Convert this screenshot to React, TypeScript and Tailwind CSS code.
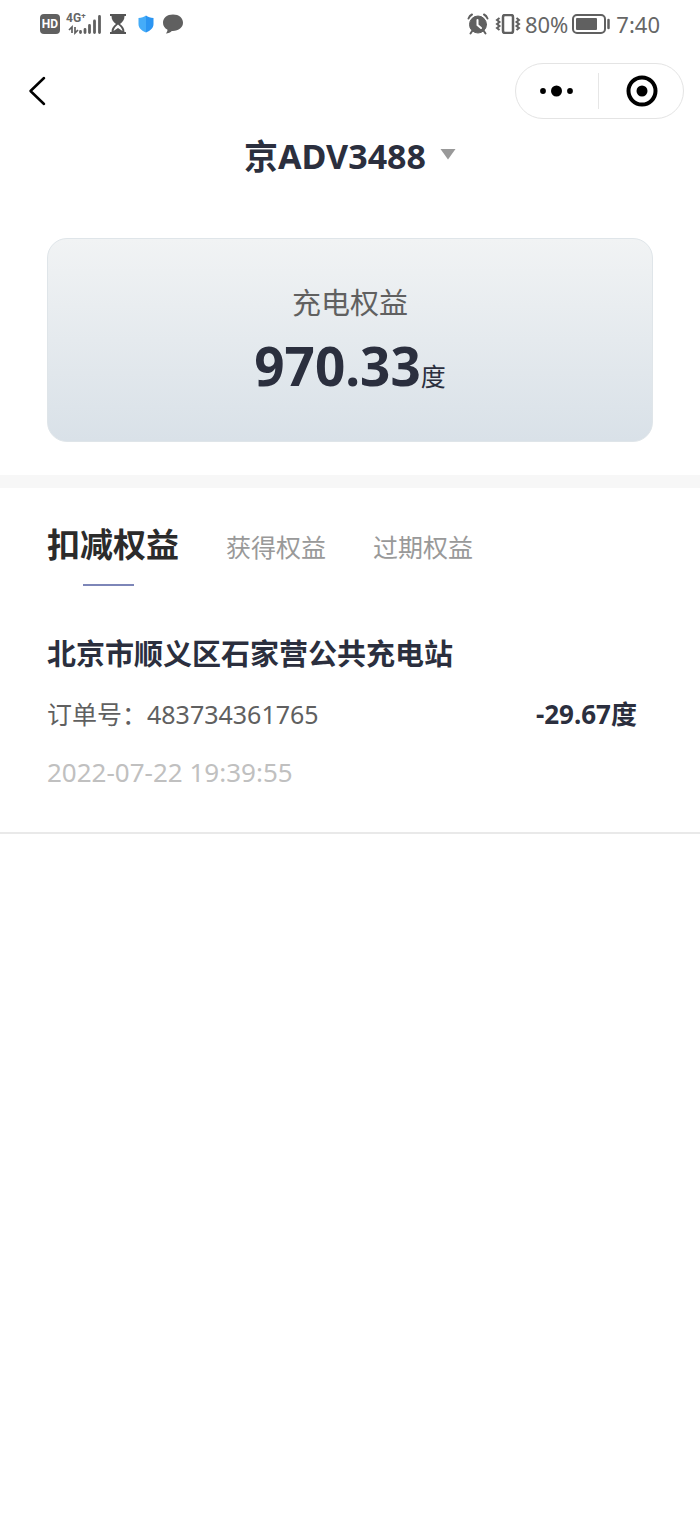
import { useState } from 'react'

const plates = ['京ADV3488']

const tabs = ['扣减权益', '获得权益', '过期权益']

const records = [
  {
    station: '北京市顺义区石家营公共充电站',
    orderNo: '483734361765',
    time: '2022-07-22 19:39:55',
    amount: '-29.67度',
  },
]

function StatusBar() {
  return (
    <div className="flex h-12 items-center justify-between px-10 text-[#666]">
      <div className="flex items-center">
        {/* HD badge */}
        <span className="flex h-5 w-5 items-center justify-center rounded bg-[#606060] font-[Roboto] text-[12px] font-bold text-white">
          HD
        </span>
        {/* Signal */}
        <div className="relative ml-1 h-6 w-9">
          <span className="absolute top-0 left-0.5 font-[Roboto] text-[12px] leading-3 font-bold">4G⁺</span>
          <svg className="absolute inset-0" width="38" height="24" viewBox="0 0 38 24" fill="none" stroke="#606060">
            <path d="M8 21v-6l-3 3M11 15v6l3-3" strokeWidth="1.700" />
            <path d="M16.500 19.500v1M21 17.500v3M25.500 13.500v7M30.500 9v11.500M35.500 4.500v16" strokeWidth="2.800" strokeLinecap="round" />
          </svg>
        </div>
        {/* Hourglass */}
        <svg className="ml-2.5" width="16" height="20" viewBox="0 0 16 20">
          <path d="M0 0h16v2h-1.500c0 4-2 6-4.500 8 2.500 2 4.500 4 4.500 8H16v2H0v-2h1.500c0-4 2-6 4.500-8-2.500-2-4.500-4-4.500-8H0z" fill="#555" />
          <path d="M8 10.500c-2.500 2-4 4-4.500 6.500L8 14l4.500 3c-.5-2.500-2-4.500-4.500-6.500z" fill="#fff" />
        </svg>
        {/* Shield */}
        <svg className="ml-3" width="16" height="18" viewBox="0 0 16 18">
          <path d="M8 .5c2 1.500 4.500 2.500 7.500 2.500v6c0 4-3 6.500-7.500 8.500z" fill="#2b95f2" />
          <path d="M8 .5C6 2 3.500 3 .5 3v6c0 4 3 6.500 7.500 8.500z" fill="#45acf8" />
        </svg>
        {/* Chat bubble */}
        <svg className="ml-2" width="22" height="20" viewBox="0 0 22 20" fill="#606060">
          <path d="M11 .5C5 .5 1 4 1 8.700c0 3 1.700 5.600 4.500 7 0 1.500-.7 2.800-1.700 3.800 2.700-.1 4.700-1.100 6-2.600 6.500.4 11.200-3.400 11.200-8.200C21 4 17 .5 11 .5z" />
        </svg>
      </div>

      <div className="flex items-center">
        {/* Alarm */}
        <svg width="22" height="22" viewBox="0 0 22 22" fill="none" stroke="#606060" strokeLinecap="round">
          <circle cx="11" cy="11.500" r="8.500" fill="#606060" />
          <path d="M1.500 5.500C2.200 3.700 3.500 2.300 5 1.500M20.500 5.500c-.7-1.800-2-3.200-3.500-4M5.500 17.500L3.500 20.500M16.500 17.500L18.500 20.500" strokeWidth="2" />
          <path d="M10.500 7v5l3.500 3" stroke="#fff" strokeWidth="2" />
        </svg>
        {/* Vibrate */}
        <svg className="ml-1.5" width="26" height="20" viewBox="0 0 26 20" fill="none" stroke="#606060">
          <rect x="8" y="1" width="10" height="18" rx="2" strokeWidth="2.500" />
          <path d="M4.500 4L2 6l2.500 2L2 10l2.500 2L2 14l2.500 2M21.500 4L24 6l-2.500 2 2.500 2-2.500 2 2.500 2-2.500 2" strokeWidth="2" />
        </svg>
        <span className="ml-1 text-[22px] leading-6">80%</span>
        {/* Battery */}
        <svg className="ml-1" width="38" height="20" viewBox="0 0 38 20" fill="none" stroke="#606060">
          <rect x="1" y="1" width="32" height="18" rx="4" strokeWidth="2" />
          <rect x="4" y="4" width="21" height="12" rx="1" fill="#606060" stroke="none" />
          <path d="M36.500 6v8" strokeWidth="2.500" strokeLinecap="round" />
        </svg>
        <span className="ml-1.5 text-[22px] leading-6">7:40</span>
      </div>
    </div>
  )
}

function NavBar() {
  return (
    <div className="mt-[15px] flex h-14 items-center justify-between pr-4 pl-7">
      <button aria-label="返回">
        <svg width="20" height="30" viewBox="0 0 20 30" fill="none" stroke="#000" strokeWidth="2.500" strokeLinecap="round" strokeLinejoin="round">
          <path d="M16 2L2.500 15 16 28" />
        </svg>
      </button>
      <div className="flex h-14 w-[169px] items-center rounded-full border border-[#e4e4e4]">
        <button className="flex flex-1 justify-center" aria-label="更多">
          <svg width="36" height="12" viewBox="0 0 36 12">
            <circle cx="4" cy="6" r="2.900" />
            <circle cx="17.500" cy="6" r="5.500" />
            <circle cx="31" cy="6" r="2.900" />
          </svg>
        </button>
        <span className="h-9 w-px bg-[#e6e6e6]" />
        <button className="flex flex-1 justify-center pl-0.5" aria-label="关闭">
          <svg width="32" height="32" viewBox="0 0 32 32">
            <circle cx="16" cy="16" r="13.500" fill="none" stroke="#000" strokeWidth="4" />
            <circle cx="16" cy="16" r="5.500" />
          </svg>
        </button>
      </div>
    </div>
  )
}

export default function App() {
  const [plate, setPlate] = useState(plates[0])
  const [active, setActive] = useState(0)

  return (
    <div className="min-h-screen bg-white font-['Noto_Sans','Noto_Sans_CJK_SC',sans-serif] text-[#2b2f3e]">
      <StatusBar />
      <NavBar />

      {/* Plate picker */}
      <label className="mt-3 flex items-center justify-center gap-3.5">
        <select
          aria-label="车牌号"
          value={plate}
          onChange={(e) => setPlate(e.target.value)}
          className="field-sizing-content h-12 appearance-none bg-transparent text-[34px] font-bold outline-none"
        >
          {plates.map((p) => (
            <option key={p}>{p}</option>
          ))}
        </select>
        <svg width="16" height="12" viewBox="0 0 16 12" fill="#999">
          <path d="M.5 0h15L8 10.500z" />
        </svg>
      </label>

      {/* Balance */}
      <section className="mx-[47px] mt-[59px] flex h-[204px] flex-col items-center rounded-[20px] border border-[#dfe5e9] bg-linear-to-b from-[#f1f3f4] to-[#d9e1e8] pt-11">
        <h2 className="text-[29px] leading-10 text-[#606060]">充电权益</h2>
        <p className="mt-2 flex items-baseline">
          <span className="text-[53px] leading-[70px] font-bold">970.33</span>
          <span className="text-[25px]">度</span>
        </p>
      </section>

      <div className="mt-[33px] h-[13px] bg-[#f7f7f7]" />

      {/* Tabs */}
      <div role="tablist" className="mt-8 flex h-[50px] items-baseline gap-[47px] px-[47px]">
        {tabs.map((tab, i) => (
          <button
            key={tab}
            role="tab"
            aria-selected={i === active}
            onClick={() => setActive(i)}
            className={
              i === active
                ? 'relative h-[50px] text-[33px] font-bold text-[#2b2b2b]'
                : 'h-[50px] text-[25px] text-[#999]'
            }
          >
            {tab}
            {i === active && (
              <span className="absolute -bottom-4 left-9 h-0.5 w-[51px] bg-[#7d86b8]" />
            )}
          </button>
        ))}
      </div>

      {/* Records */}
      <ul className="mt-16">
        {records.map((record) => (
          <li key={record.orderNo} className="border-b-2 border-[#e9e9e9] pr-[63px] pb-10 pl-[47px]">
            <h3 className="text-[29px] leading-10 font-bold">{record.station}</h3>
            <div className="mt-5 flex items-center justify-between leading-10">
              <span className="text-[25px] text-[#606060]">订单号：{record.orderNo}</span>
              <span className="text-[26px] font-bold">{record.amount}</span>
            </div>
            <time className="mt-[18px] block text-[26px] leading-10 text-[#c0c0c0]">{record.time}</time>
          </li>
        ))}
      </ul>
    </div>
  )
}
